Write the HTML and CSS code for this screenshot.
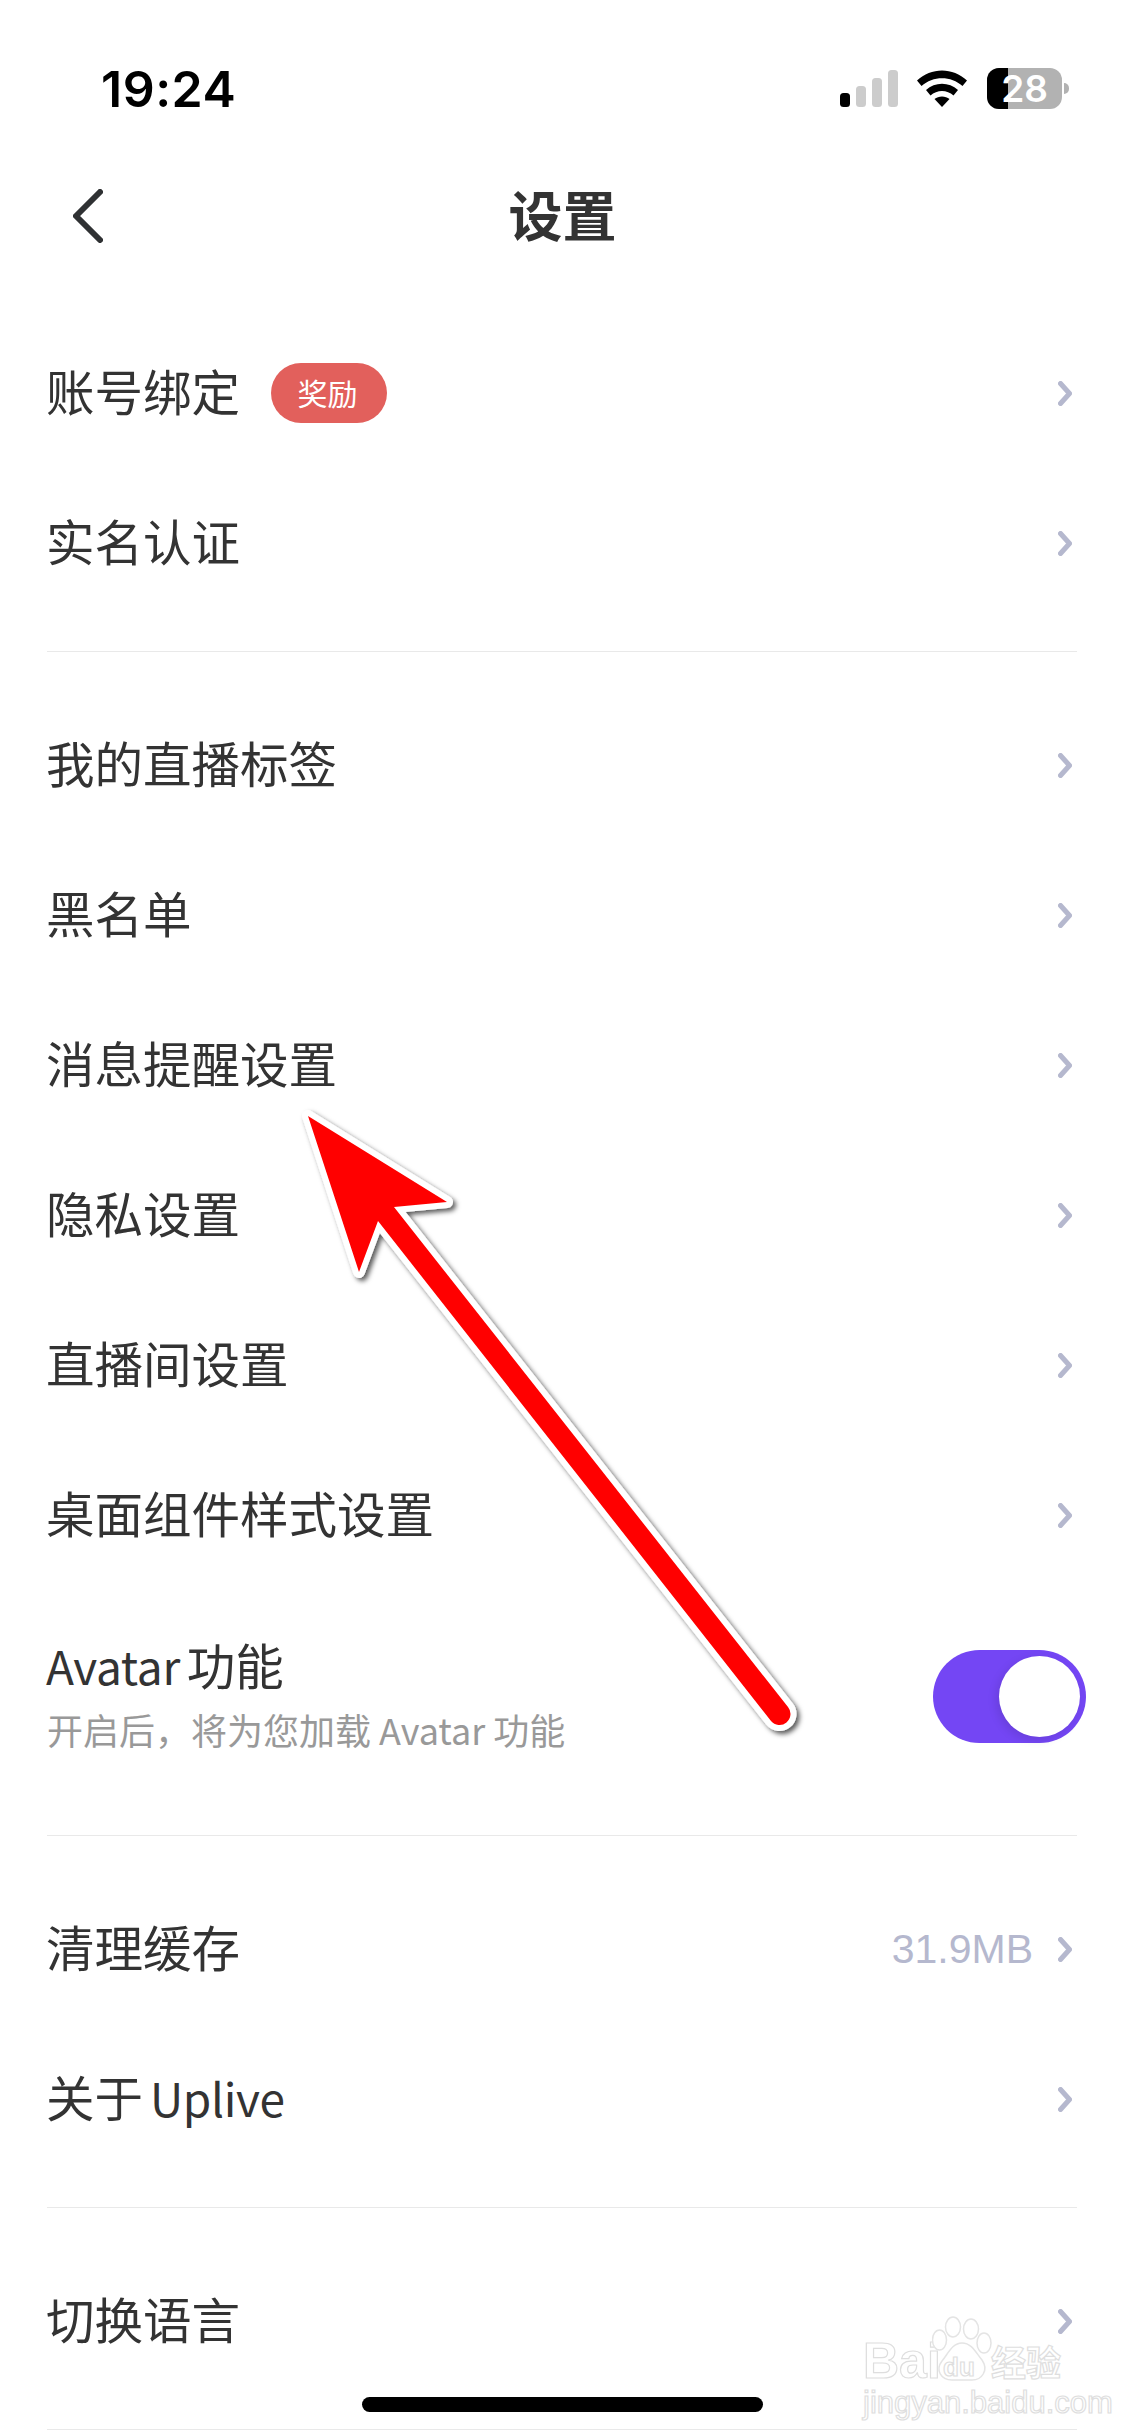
FILE: index.html
```html
<!DOCTYPE html>
<html lang="zh-CN">
<head>
<meta charset="utf-8">
<title>设置</title>
<link rel="stylesheet" href="styles.css">
</head>
<body>
<svg class="defs" width="0" height="0" aria-hidden="true">
  <symbol id="chev" viewBox="0 0 14 25"><path d="M2.500 2.500L11.500 12.500L2.500 22.500" fill="none" stroke="#b5b8ce" stroke-width="5" stroke-linecap="round" stroke-linejoin="round"/></symbol>
</svg>
<main class="app">
  <header class="status">
    <span class="time">19:24</span>
    <div class="status-icons">
      <svg class="signal" width="58" height="37" viewBox="0 0 58 37"><rect x="0" y="23" width="10" height="14" rx="3.500" fill="#000"/><rect x="16" y="16" width="10" height="21" rx="3.500" fill="#ccc"/><rect x="32" y="8" width="10" height="29" rx="3.500" fill="#ccc"/><rect x="48" y="0" width="10" height="37" rx="3.500" fill="#ccc"/></svg>
      <svg class="wifi" width="50" height="37" viewBox="0 0 50 37"><path d="M0 10.500C14-3 36-3 50 10.500L45.500 16C34 5.500 16 5.500 4.500 16Z" fill="#000"/><path d="M9 20C18 11.500 32 11.500 41 20L36.500 25.500C30 19.500 20 19.500 13.500 25.500Z" fill="#000"/><path d="M17.500 29C21.500 25.500 28.500 25.500 32.500 29L25 37Z" fill="#000"/></svg>
      <div class="battery"><span class="battery-level"></span><span class="battery-text">28</span></div>
      <span class="battery-nub"></span>
    </div>
  </header>
  <nav class="nav">
    <svg class="back" width="30" height="54" viewBox="0 0 30 54"><path d="M27 3L3 27L27 51" fill="none" stroke="#2f3133" stroke-width="6" stroke-linecap="round" stroke-linejoin="round"/></svg>
    <h1 class="title">设置</h1>
  </nav>
  <div class="list">
    <section class="group group-first">
      <div class="row"><span class="label">账号绑定</span><span class="badge">奖励</span><svg class="chev"><use href="#chev"/></svg></div>
      <div class="row"><span class="label">实名认证</span><svg class="chev"><use href="#chev"/></svg></div>
    </section>
    <section class="group">
      <div class="row"><span class="label">我的直播标签</span><svg class="chev"><use href="#chev"/></svg></div>
      <div class="row"><span class="label">黑名单</span><svg class="chev"><use href="#chev"/></svg></div>
      <div class="row"><span class="label">消息提醒设置</span><svg class="chev"><use href="#chev"/></svg></div>
      <div class="row"><span class="label">隐私设置</span><svg class="chev"><use href="#chev"/></svg></div>
      <div class="row"><span class="label">直播间设置</span><svg class="chev"><use href="#chev"/></svg></div>
      <div class="row"><span class="label">桌面组件样式设置</span><svg class="chev"><use href="#chev"/></svg></div>
      <div class="row row-tall">
        <div class="stack"><span class="label"><span class="latin">Avatar</span> 功能</span><span class="sub">开启后，将为您加载 Avatar 功能</span></div>
        <div class="toggle"><span class="knob"></span></div>
      </div>
    </section>
    <section class="group">
      <div class="row"><span class="label">清理缓存</span><span class="value">31.9MB</span><svg class="chev chev-after"><use href="#chev"/></svg></div>
      <div class="row"><span class="label">关于 <span class="latin">Uplive</span></span><svg class="chev"><use href="#chev"/></svg></div>
    </section>
    <section class="group">
      <div class="row"><span class="label">切换语言</span><svg class="chev"><use href="#chev"/></svg></div>
    </section>
  </div>
  <svg class="arrow" width="1125" height="2436" viewBox="0 0 1125 2436">
    <defs><filter id="sh" x="-10%" y="-10%" width="120%" height="120%"><feDropShadow dx="3" dy="3" stdDeviation="2.500" flood-color="#000" flood-opacity=".65"/></filter></defs>
    <path filter="url(#sh)" paint-order="stroke" d="M308 1116L447 1202L394 1207L788 1707A11 11 0 0 1 771 1721L378 1221L359 1272Z" fill="#f00" stroke="#fff" stroke-width="12" stroke-linejoin="round"/>
  </svg>
  <div class="watermark">
    <div class="wm-top">
      <span class="wm-bai">Bai</span>
      <svg class="wm-paw" width="60" height="66" viewBox="0 0 60 66"><g fill="#fff" stroke="#e4e4e4" stroke-width="1.500"><ellipse cx="21" cy="11" rx="7.500" ry="10"/><ellipse cx="39" cy="13" rx="7.500" ry="10"/><ellipse cx="7.500" cy="24" rx="7" ry="10"/><ellipse cx="52" cy="27" rx="7" ry="10"/><path d="M30 27C40 27 44 37 50 44C57 54 50 64 40 64L20 64C9 64 3 54 10 45C16 38 20 27 30 27Z"/></g></svg>
      <span class="wm-du">du</span>
      <span class="wm-jy">经验</span>
    </div>
    <div class="wm-url">jingyan.baidu.com</div>
  </div>
  <div class="home"></div>
</main>
</body>
</html>
```
FILE: styles.css
```css
* { box-sizing: border-box; }
html, body { margin: 0; padding: 0; background: #fff; }
.defs { position: absolute; }
.app {
  position: relative;
  width: 1125px;
  height: 2436px;
  overflow: hidden;
  background: #fff;
  color: #333;
  font-family: "Noto Sans CJK SC", "Noto Sans", sans-serif;
}
.status {
  height: 166px;
  position: relative;
  display: flex;
  align-items: flex-start;
  justify-content: space-between;
  padding: 59px 56px 0 101px;
}
.time {
  font-family: Inter, "Liberation Sans", sans-serif;
  font-weight: 600;
  font-size: 50px;
  letter-spacing: .5px;
  line-height: 60px;
  color: #000;
}
.status-icons {
  display: flex;
  align-items: flex-start;
  padding-top: 9px;
}
.signal { margin-top: 2px; margin-right: 19px; }
.wifi { margin-top: 2px; margin-right: 20px; }
.battery {
  position: relative;
  width: 75px;
  height: 41px;
  border-radius: 12px;
  background: #b2b2b2;
}
.battery-level { position: absolute; left: 0; top: 0; bottom: 0; width: 21px; background: #000; border-radius: 12px 0 0 12px; }
.battery-text {
  position: relative;
  display: block;
  text-align: center;
  color: #fff;
  font-family: Inter, "Liberation Sans", sans-serif;
  font-weight: 600;
  font-size: 37px;
  line-height: 41px;
}
.battery-nub {
  width: 5px;
  height: 11px;
  margin: 15px 0 0 2px;
  background: #b2b2b2;
  border-radius: 0 6px 6px 0;
}
.nav {
  height: 100px;
  position: relative;
  display: flex;
  align-items: center;
  justify-content: center;
  padding-bottom: 5px;
}
.back { position: absolute; left: 73px; top: 23px; }
.title {
  margin: 0;
  font-size: 54px;
  line-height: 70px;
  font-weight: 700;
  color: #333;
}
.list { margin: 0 48px 0 47px; padding-top: 52px; }
.group { padding: 38px 0 33px; border-bottom: 1px solid #e9e9e9; }
.group-first { padding-top: 0; }
.row { height: 150px; display: flex; align-items: center; }
.row-tall { height: 212px; }
.label { font-size: 48.500px; line-height: 60px; color: #333; margin-left: -1px; padding-bottom: 6px; word-spacing: -4px; }
.latin { font-size: 46px; letter-spacing: -.3px; }
.badge {
  margin-left: 31px;
  width: 116px;
  height: 60px;
  border-radius: 30px;
  background: #e2605c;
  color: #fff;
  font-size: 30px;
  line-height: 58px;
  padding-right: 3px;
  text-align: center;
}
.chev { width: 14px; height: 25px; margin-left: auto; margin-right: 5px; flex: none; }
.chev-after { margin-left: 25px; }
.value { margin-left: auto; color: #b5b8ce; font-family: "Liberation Sans", sans-serif; font-size: 41px; }
.stack { display: flex; flex-direction: column; margin-top: -5px; }
.sub { font-size: 36px; line-height: 50px; color: #999; margin-top: 3px; }
.toggle {
  margin-left: auto;
  margin-right: -9px;
  width: 153px;
  height: 93px;
  border-radius: 47px;
  background: #7446f4;
  padding: 6px;
  display: flex;
  justify-content: flex-end;
}
.knob { width: 81px; height: 81px; border-radius: 50%; background: #fff; box-shadow: -3px 3px 10px rgba(0,0,0,.1); }
.arrow { position: absolute; left: 0; top: 0; pointer-events: none; }
.watermark {
  position: absolute;
  left: 863px;
  top: 2316px;
  width: 202px;
  color: #fff;
  -webkit-text-stroke: 1.200px #dedede;
  font-family: "Liberation Sans", sans-serif;
}
.wm-top { position: relative; height: 66px; }
.wm-bai { position: absolute; left: 0; top: 20px; font-size: 50px; line-height: 50px; font-weight: 700; }
.wm-paw { position: absolute; left: 69px; top: 0; }
.wm-du { position: absolute; left: 80px; top: 38px; font-size: 26px; line-height: 26px; font-weight: 700; }
.wm-jy { position: absolute; left: 128px; top: 25px; font-family: "Noto Sans CJK SC", sans-serif; font-weight: 700; font-size: 35px; line-height: 40px; }
.wm-url { font-size: 31px; line-height: 36px; margin-top: 3px; white-space: nowrap; }
.home {
  position: absolute;
  left: 362px;
  top: 2397px;
  width: 401px;
  height: 15px;
  border-radius: 8px;
  background: #000;
}
```
